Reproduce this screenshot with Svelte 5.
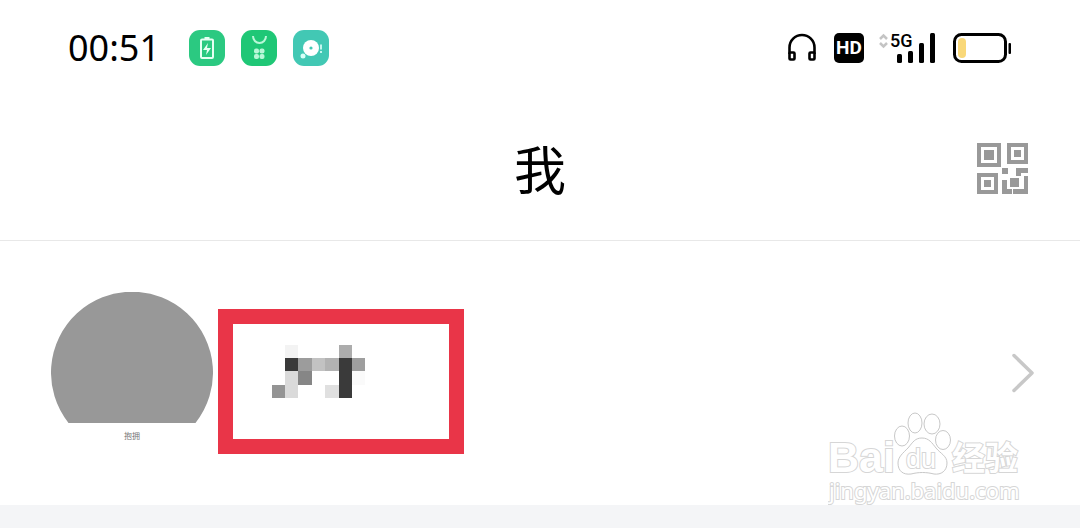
<script>
    let { time = "00:51", title = "我" } = $props();

    // censored nickname, in 13px blocks: [column, row, colour]
    const blocks = [
        [1, 0, "#f3f3f3"],
        [5, 0, "#acacac"],
        [1, 1, "#3a3a3a"],
        [2, 1, "#9c9c9c"],
        [3, 1, "#c2c2c2"],
        [4, 1, "#b2b2b2"],
        [5, 1, "#3a3a3a"],
        [6, 1, "#9e9e9e"],
        [1, 2, "#dadada"],
        [2, 2, "#868686"],
        [5, 2, "#3a3a3a"],
        [6, 2, "#fafafa"],
        [0, 3, "#949494"],
        [1, 3, "#dadada"],
        [4, 3, "#e0e0e0"],
        [5, 3, "#3a3a3a"],
    ];
    const colX = [0, 13, 26, 40, 53, 67, 80, 93];
    const rowY = [0, 13, 26, 40, 53];
</script>

<div class="page">
    <div class="status">
        <time>{time}</time>
        <div class="apps">
            <svg width="36" height="36" viewBox="0 0 36 36">
                <rect width="36" height="36" rx="11" fill="#2bc981" />
                <path d="M15.500 7h5v3h-5z" fill="#e6fff3" />
                <rect x="12" y="9.500" width="12" height="18.500" rx="1" fill="none" stroke="#e6fff3" stroke-width="2" />
                <path d="M19 13l-5 7h4l-1 5 5-7h-4z" fill="#e6fff3" />
            </svg>
            <svg width="36" height="36" viewBox="0 0 36 36">
                <rect width="36" height="36" rx="11" fill="#1fc776" />
                <path d="M12 6a6.500 7 0 0 0 13 0" fill="none" stroke="#b9f7d8" stroke-width="2" />
                <g fill="#b9f7d8">
                    <rect x="13" y="18.500" width="5" height="5" rx="2" />
                    <rect x="18.500" y="18.500" width="5" height="5" rx="2" />
                    <rect x="13" y="24" width="5" height="5" rx="2" />
                    <rect x="18.500" y="24" width="5" height="5" rx="2" />
                </g>
            </svg>
            <svg width="36" height="36" viewBox="0 0 36 36">
                <rect width="36" height="36" rx="11" fill="#42c8b4" />
                <circle cx="18" cy="18" r="8" fill="#fff" />
                <circle cx="18" cy="18" r="1.600" fill="#42c8b4" />
                <circle cx="10" cy="26" r="2.500" fill="#d8fff8" />
                <path d="M28 14.500v5M28 21v2" stroke="#c5f5ee" stroke-width="2" />
            </svg>
        </div>
        <div class="system">
            <svg width="32" height="30" viewBox="0 0 32 30">
                <path d="M1.500 21V14.500a12.500 12.500 0 0 1 25 0V21" fill="none" stroke="#000" stroke-width="2.600" />
                <rect x="1.500" y="19.500" width="5" height="7" rx="1" fill="#fff" stroke="#000" stroke-width="2.600" />
                <rect x="21.500" y="19.500" width="5" height="7" rx="1" fill="#fff" stroke="#000" stroke-width="2.600" />
            </svg>
            <span class="hd">HD</span>
            <svg class="signal" width="60" height="30" viewBox="0 0 60 30">
                <path d="M2 6l3.500-3.500L9 6M2 10l3.500 3.500L9 10" fill="none" stroke="#c4c4c4" stroke-width="2.500" />
                <text x="12" y="14" class="net">5G</text>
                <g fill="#000">
                    <rect x="19" y="21" width="5" height="9" rx="1.500" />
                    <rect x="30" y="18" width="5" height="12" rx="1.500" />
                    <rect x="41" y="10" width="5" height="20" rx="1.500" />
                    <rect x="52" y="0" width="5" height="30" rx="1.500" />
                </g>
            </svg>
            <svg width="60" height="30" viewBox="0 0 60 30">
                <rect x="2.500" y="1.500" width="51" height="27" rx="7" fill="#fff" stroke="#000" stroke-width="3" />
                <rect x="6" y="5" width="8" height="20" rx="4" fill="#f9d879" />
                <rect x="56.500" y="10" width="2.500" height="11" rx="1" fill="#000" />
            </svg>
        </div>
    </div>

    <header>
        <h1>{title}</h1>
        <button type="button" aria-label="QR code">
            <svg width="51" height="51" viewBox="0 0 51 51">
                <g fill="none" stroke="#999" stroke-width="4">
                    <rect x="2" y="2" width="20" height="20" />
                    <rect x="32" y="2" width="17" height="17" />
                    <rect x="2" y="32" width="17" height="17" />
                </g>
                <g fill="#999">
                    <rect x="7" y="7" width="10" height="10" />
                    <rect x="37" y="7" width="7" height="7" />
                    <rect x="7" y="37" width="7" height="7" />
                    <path d="M25 25h6v6h-6zM39 25h12v5h-7v3h-5zM47 33h4v18H36v-5h11zM25 37h5v9h5v5H25z" />
                    <rect x="33" y="35" width="9" height="9" />
                </g>
            </svg>
        </button>
    </header>

    <a class="profile" href="#profile" aria-label="Profile">
        <span class="avatar">
            <svg width="162" height="131" viewBox="0 0 162 131">
                <path d="M17.500 131A81 81 0 1 1 144.500 131z" fill="#989898" />
            </svg>
            <small>抱拥</small>
        </span>
        <span class="name">
            <svg width="93" height="53" viewBox="0 0 93 53">
                {#each blocks as [c, r, fill]}
                    <rect x={colX[c]} y={rowY[r]} width={colX[c + 1] - colX[c]} height={rowY[r + 1] - rowY[r]} {fill} />
                {/each}
            </svg>
        </span>
        <svg class="chevron" width="24" height="40" viewBox="0 0 24 40">
            <path d="M3 2.500l18 17.500L3 37.500" fill="none" stroke="#c8c8c8" stroke-width="3.500" stroke-linecap="round" stroke-linejoin="round" />
        </svg>
    </a>

    <svg class="watermark" width="200" height="100" viewBox="0 0 200 100">
        <text x="0" y="67" class="latin">Bai</text>
        <g class="paw">
            <ellipse cx="74" cy="31" rx="7.500" ry="10" />
            <ellipse cx="87" cy="18" rx="7" ry="10" />
            <ellipse cx="104" cy="19" rx="8" ry="10" />
            <ellipse cx="115" cy="35" rx="7.500" ry="9.500" />
            <path d="M94 33c7 0 10 5 14 10 5 6 11 8 11 15 0 8-6 12-13 11-8-2-15-2-23 0-8 1-13-3-13-11 0-6 5-10 10-15 5-6 7-10 14-10z" />
        </g>
        <text x="78" y="63" class="du">du</text>
        <text x="124" y="65" class="han">经验</text>
        <text x="1" y="94" class="site">jingyan.baidu.com</text>
    </svg>
</div>

<style>
    :global(body) {
        margin: 0;
        background: #f4f5f7;
    }

    .page {
        position: relative;
        font-family: Roboto, "Noto Sans CJK SC", sans-serif;
        color: #000;
    }

    svg {
        display: block;
        flex: none;
    }

    .status {
        display: flex;
        align-items: center;
        height: 96px;
        padding: 0 68px;
        background: #fff;
    }

    time {
        min-width: 93px;
        font-family: "Noto Sans", sans-serif;
        font-size: 36px;
        line-height: 40px;
    }

    .apps {
        display: flex;
        gap: 16px;
        margin-left: 28px;
    }

    .system {
        display: flex;
        gap: 14px;
        margin-left: auto;
    }

    .hd {
        width: 30px;
        border-radius: 5px;
        background: #000;
        color: #fff;
        font-size: 19px;
        font-weight: 700;
        line-height: 30px;
        text-align: center;
    }

    .signal {
        overflow: visible;
    }

    .net {
        font-size: 18px;
        font-weight: 500;
    }

    header {
        display: grid;
        grid-template-columns: 1fr auto 1fr;
        align-items: center;
        height: 144px;
        padding: 0 52px;
        border-bottom: 1px solid #e8e8e8;
        background: #fff;
    }

    h1 {
        grid-column: 2;
        margin: 0;
        padding-top: 10px;
        font-size: 52px;
        font-weight: 400;
        line-height: 60px;
    }

    button {
        justify-self: end;
        padding: 0;
        border: 0;
        background: none;
    }

    .profile {
        display: flex;
        align-items: flex-end;
        padding: 51px 45px 51px 51px;
        background: #fff;
        text-decoration: none;
    }

    .avatar {
        display: flex;
        flex-direction: column;
        align-items: center;
        height: 162px;
    }

    small {
        margin-top: 8px;
        color: #777;
        font-size: 8px;
        line-height: 12px;
    }

    .name {
        box-sizing: border-box;
        width: 246px;
        height: 145px;
        margin-left: 5px;
        padding: 21px 39px;
        border: 15px solid #e93548;
    }

    .chevron {
        align-self: center;
        margin-left: auto;
    }

    /* floats over the profile row */
    .watermark {
        position: absolute;
        right: 52px;
        bottom: 0;
        fill: #fff;
        stroke: #d6d6d6;
        stroke-width: 2px;
        paint-order: stroke;
        pointer-events: none;
    }

    .paw {
        stroke: #c8c8c8;
        stroke-width: 1px;
        paint-order: normal;
    }

    .latin {
        font: 700 43px "Liberation Sans", sans-serif;
    }

    .du {
        font: 400 27px "Liberation Sans", sans-serif;
    }

    .han {
        font: 700 33px "Noto Sans CJK SC", sans-serif;
    }

    .site {
        font: 400 22px "Noto Sans", sans-serif;
    }
</style>
